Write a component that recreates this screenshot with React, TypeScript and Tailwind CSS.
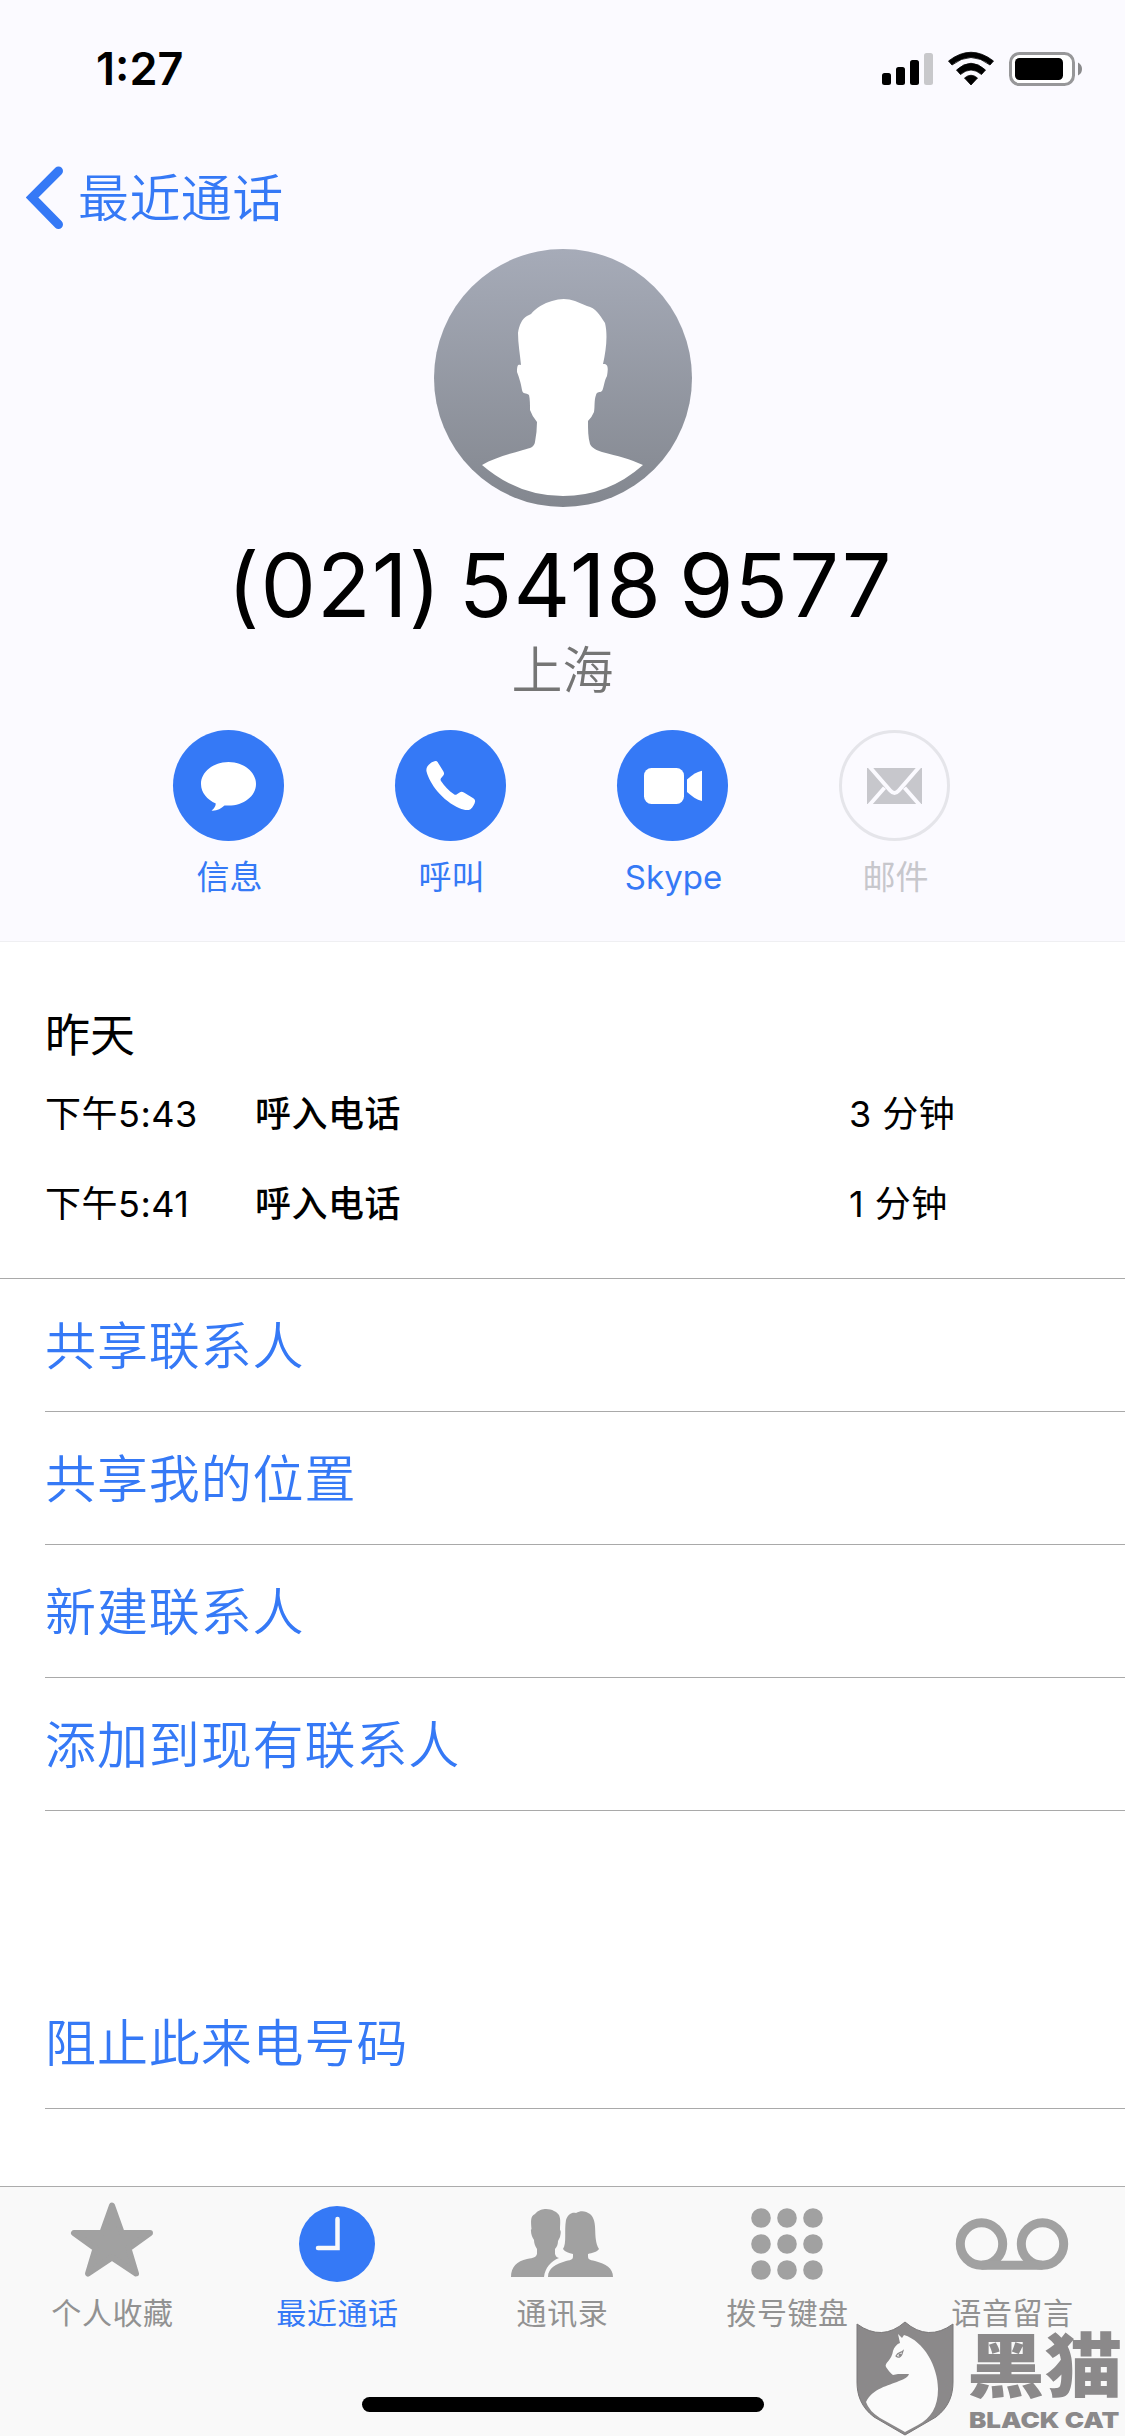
import { ReactNode } from 'react'

const actions: { label: string; icon: ReactNode; disabled?: boolean }[] = [
  {
    label: '信息',
    icon: (
      <svg className="w-full h-full" viewBox="0 0 111 111" fill="#fff">
        <path d="M55.500 32C70.600 32 83 41.800 83 54C83 66.200 70.600 75.600 55.500 75.600L51.500 75.400C48 78.500 44 81 38.500 80.600C40.800 78.800 42.600 76.600 42.800 73.400C34.200 69.800 28 62.600 28 54C28 41.800 40.400 32 55.500 32Z" />
      </svg>
    ),
  },
  {
    label: '呼叫',
    icon: (
      <svg className="w-full h-full" viewBox="0 0 111 111" fill="#fff">
        <path d="M35.500 33.200C37.500 31.600 40 30.600 41.300 31C42.300 31.300 43 32.700 43.800 34L48.300 41.200C49.300 42.900 49.300 44 48.300 45.400L46 48.300C45.400 49.200 45.400 50 46 51C49.500 56.400 53.800 60.800 59 64.200C60 64.900 60.900 64.900 61.900 64.200L64.600 62.400C66 61.600 67.200 61.600 68.900 62.600L77.500 67.800C79.300 69 80.200 69.900 80.100 71.300C79.900 73.500 78 77.300 75.500 79.200C73 80.800 68.500 79.900 64.500 78.200C56 74.500 48.500 68.500 42.500 61.500C37 55 33 47.500 31.600 41.800C30.700 38 32.500 35.500 35.500 33.200Z" />
      </svg>
    ),
  },
  {
    label: 'Skype',
    icon: (
      <svg className="w-full h-full" viewBox="0 0 111 111" fill="#fff">
        <rect x="27" y="38" width="40" height="36" rx="7.500" />
        <path d="M70 49.500C75 45 79.500 41.700 85 40.700V71C79.500 69.800 75 66.400 70 62Z" />
      </svg>
    ),
  },
  {
    label: '邮件',
    disabled: true,
    icon: (
      <svg className="w-full h-full" viewBox="0 0 111 111">
        <circle cx="55.500" cy="55.500" r="54" fill="none" stroke="#e5e5ea" strokeWidth="3" />
        <rect x="28" y="38" width="55" height="36" fill="#c7c7cc" />
        <path d="M29.500 35.500L51.200 60.500Q55.500 65.500 59.800 60.500L81.500 35.500M29.500 76L45.500 57.800M81.500 76L65.500 57.800" fill="none" stroke="#fbfaff" strokeWidth="4" />
      </svg>
    ),
  },
]

const calls = [
  { time: '下午5:43', type: '呼入电话', duration: '3 分钟' },
  { time: '下午5:41', type: '呼入电话', duration: '1 分钟' },
]

const links = ['共享联系人', '共享我的位置', '新建联系人', '添加到现有联系人']

const tabs: { label: string; icon: ReactNode; active?: boolean }[] = [
  {
    label: '个人收藏',
    icon: (
      <svg className="w-[120px] h-[90px]" viewBox="0 0 120 90" fill="#a1a1a1" stroke="#a1a1a1" strokeWidth="6" strokeLinejoin="round">
        <path d="M60 13.500L69.800 41H98L76.500 56.500L84 81.500L60 65.500L36 81.500L43.500 56.500L22 41H50.200Z" />
      </svg>
    ),
  },
  {
    label: '最近通话',
    active: true,
    icon: (
      <svg className="w-[120px] h-[90px]" viewBox="0 0 120 90">
        <circle cx="60" cy="52" r="38" fill="#3579f6" />
        <path d="M60.500 27V56H41" fill="none" stroke="#f9f9f9" strokeWidth="4.500" strokeLinecap="round" />
      </svg>
    ),
  },
  {
    label: '通讯录',
    icon: (
      <svg className="w-[120px] h-[90px]" viewBox="0 0 120 90" fill="#a1a1a1">
        <path d="M9 85C9 75 15 69 25 67C32 66 34 65 35 62V57C33 54 32 51 32 48C30 45 29 42 29 39Q28.500 38 29.500 37C29 30 28 24 33 22C36 18 41 17 44 17C50 17 55 20 57 23C59 28 58 32 58 38Q59.500 39 58 45L56 49C56 52 55 55 53 57V62C54 65 55 65.500 57 66C49 69 43 76 42 85Z" />
        <path d="M46 85C46 76 54 72 64 69C70 68 71 67 71 64V62C67 61 63 60 61 57C65 51 62 39 64 28C66 22 70 20 74 21C79 18 84 19 88 22C97 30 90 45 97 57C95 60 90 61 86 62V64C86 67 87 68 93 69C104 72 111 76 111 85Z" />
      </svg>
    ),
  },
  {
    label: '拨号键盘',
    icon: (
      <svg className="w-[120px] h-[90px]" viewBox="0 0 120 90" fill="#a1a1a1">
        {[26, 52, 78].map((y) => [34, 60, 86].map((x) => <circle key={`${x}-${y}`} cx={x} cy={y} r="9.800" />))}
      </svg>
    ),
  },
  {
    label: '语音留言',
    icon: (
      <svg className="w-[120px] h-[90px]" viewBox="0 0 120 90" fill="none" stroke="#a1a1a1" strokeWidth="9">
        <circle cx="29.500" cy="52" r="21.200" />
        <circle cx="90.500" cy="52" r="21.200" />
        <path d="M29.500 73.200H90.500" />
      </svg>
    ),
  },
]

function StatusBar() {
  return (
    <div className="h-[138px] pt-[45px] pl-[96px] pr-[41px] flex justify-between items-start">
      <span className="text-[45px] leading-[48px] font-semibold text-black">1:27</span>
      <svg className="w-[204px] h-[48px]" viewBox="880 45 204 48">
        <rect x="882" y="73" width="9" height="12" rx="2.500" />
        <rect x="896" y="67" width="9" height="18" rx="2.500" />
        <rect x="910" y="60" width="9" height="25" rx="2.500" />
        <rect x="924" y="53" width="9" height="32" rx="2.500" fill="#c8c8cb" />
        <path d="M948.500 61Q971 43.500 993.500 61L990 65Q971 50 952 65ZM956.500 70Q971 56.500 985.500 70L981.500 74.500Q971 65.500 960.500 74.500ZM964.500 78Q971 72.500 977.500 78L971 85Z" strokeLinejoin="round" stroke="#000" strokeWidth="0.800" />
        <rect x="1010.500" y="53.500" width="63" height="31" rx="9" fill="#fff" stroke="#979799" strokeWidth="3" />
        <rect x="1015" y="58" width="48" height="22" rx="4.500" />
        <path d="M1078 62.500Q1082 64.500 1082 69Q1082 73.500 1078 75.500Z" fill="#8a8a8c" />
      </svg>
    </div>
  )
}

function Watermark() {
  return (
    <div className="absolute left-[856px] top-[2321px] w-[269px] h-[115px] flex">
      <svg className="w-[98px] h-[115px] shrink-0" viewBox="0 0 98 115">
        <path d="M1 3Q26 21 49 1Q72 21 97 3V61C97 74 93 86 80 96L49 114L18 96C5 86 1 74 1 61Z" fill="#8b898a" stroke="#7b797a" />
        <path d="M42 13L46 17L48 14C68 20 82 46 82 68C82 86 75 97 62 104L49 111L24 97Q13 90 10 81C17 67 32 65 43 60Q52 57 53 53H42L37 54Q34 52 30 46C28 42 36 39 37 30C38 26 41 23 44 22Z" fill="#fbfbfb" />
        <path d="M40 35C42 31 45 32 47 30C46 35 43 38 40 35Z" fill="none" stroke="#8b898a" strokeWidth="1.200" />
        <circle cx="44" cy="34" r="1.500" fill="#8b898a" />
      </svg>
      <div className="ml-[13px] mt-[11px] flex flex-col items-start text-[#8b898a] whitespace-nowrap">
        <span className="text-[70px] leading-[70px] font-black origin-left scale-x-[1.11]">黑猫</span>
        <span className="mt-[6px] ml-[2px] text-[22px] leading-[24px] font-black origin-left scale-x-[1.18]">BLACK CAT</span>
      </div>
    </div>
  )
}

export default function App() {
  return (
    <div className="relative w-[1125px] h-[2436px] overflow-hidden flex flex-col bg-white text-black font-[Inter,'Noto_Sans_CJK_SC',sans-serif]">
      <header className="h-[942px] shrink-0 bg-[#fbfaff] border-b border-[#efeff2] flex flex-col">
        <StatusBar />
        <button className="h-[111px] pl-[26px] flex items-center text-[#3579f6] text-[51px]">
          <svg className="w-[38px] h-[64px] mt-[9px] mr-[14px]" viewBox="0 0 38 64">
            <path d="M32.500 5L6 31.500L32.500 58.500" fill="none" stroke="currentColor" strokeWidth="9" strokeLinecap="round" strokeLinejoin="miter" />
          </svg>
          <span className="leading-[60px] mt-[10px] font-[350] tracking-[0.4px]">最近通话</span>
        </button>
        <svg className="w-[258px] h-[258px] shrink-0 self-center" viewBox="0 0 258 258">
          <defs>
            <linearGradient id="avatar" x1="0" y1="0" x2="0" y2="1">
              <stop offset="0" stopColor="#a6abb8" />
              <stop offset="1" stopColor="#83878f" />
            </linearGradient>
          </defs>
          <circle cx="129" cy="129" r="129" fill="url(#avatar)" />
          <path d="M118 52Q130 48 141 52L153 57C162 59 165 65 171 74C174 86 172 102 169 115C175 114 174 121 173 127C170 132 170 139 168 142C166 144 163 142 162 146C160 151 161 158 160 163Q158 168 154 172C154 181 154 188 156 195C158 199 162 201 168 203C184 207 196 210 209 216Q174 247 129 247Q84 247 48 216C60 209 75 205 89 201C97 199 100 198 101 193Q103 182 103 173Q98 167 96 161C96 156 96 150 95 146C92 143 89 146 88 141C87 135 86 131 83 123C83 116 84 115 87 116C86 105 84 95 84 84C85 76 88 70 93 67L97 65C102 59 110 54 118 52Z" fill="#fff" />
        </svg>
        <h1 className="mt-[25px] h-[106px] pr-[5px] text-center text-[88px] leading-[106px] tracking-[1.1px] [word-spacing:-9px]">(021) 5418 9577</h1>
        <p className="mt-[3px] text-center text-[51px] leading-[60px] text-[#757575] font-[350]">上海</p>
        <div className="mt-[29px] pl-[173px] flex gap-[111px]">
          {actions.map((action) => (
            <div key={action.label} className={`w-[111px] flex flex-col items-center ${action.disabled ? 'text-[#c7c7cc]' : 'text-[#3579f6]'}`}>
              <div className={`w-[111px] h-[111px] rounded-full ${action.disabled ? '' : 'bg-[#3579f6]'}`}>{action.icon}</div>
              <span className="mt-[15px] pl-[2px] text-[33px] leading-[42px] font-[380]">{action.label}</span>
            </div>
          ))}
        </div>
      </header>

      <section className="h-[337px] shrink-0 pl-[45px] pt-[67px] border-b border-[#a9a9a9]">
        <h2 className="text-[45px] leading-[54px] mb-[6px]">昨天</h2>
        {calls.map((call) => (
          <div key={call.time} className="h-[90px] flex items-center text-[36px] leading-[44px] tracking-[0.5px]">
            <span className="w-[210px] font-[370]">{call.time}</span>
            <span className="w-[594px] font-medium">{call.type}</span>
            <span className="font-[370]">{call.duration}</span>
          </div>
        ))}
      </section>

      <section className="pl-[45px] text-[51px] text-[#3579f6] font-[350] tracking-[0.9px]">
        {links.map((link) => (
          <div key={link} className="h-[133px] pt-[5px] flex items-center border-b border-[#a9a9a9]">{link}</div>
        ))}
        <div className="mt-[165px] h-[133px] pt-[5px] flex items-center border-b border-[#a9a9a9]">阻止此来电号码</div>
      </section>

      <nav className="absolute left-0 bottom-0 w-[1125px] h-[250px] pt-[5px] bg-[#f9f9f9] border-t border-[#acacac] grid grid-cols-5 items-start">
        {tabs.map((tab) => (
          <div key={tab.label} className={`flex flex-col items-center ${tab.active ? 'text-[#3579f6]' : 'text-[#929292]'}`}>
            <div className="pr-[2px]">{tab.icon}</div>
            <span className="mt-[9px] text-[30px] leading-[44px] tracking-[0.600px]">{tab.label}</span>
          </div>
        ))}
      </nav>
      <div className="absolute left-[362px] top-[2397px] w-[402px] h-[15px] rounded-full bg-black" />
      <Watermark />
    </div>
  )
}
